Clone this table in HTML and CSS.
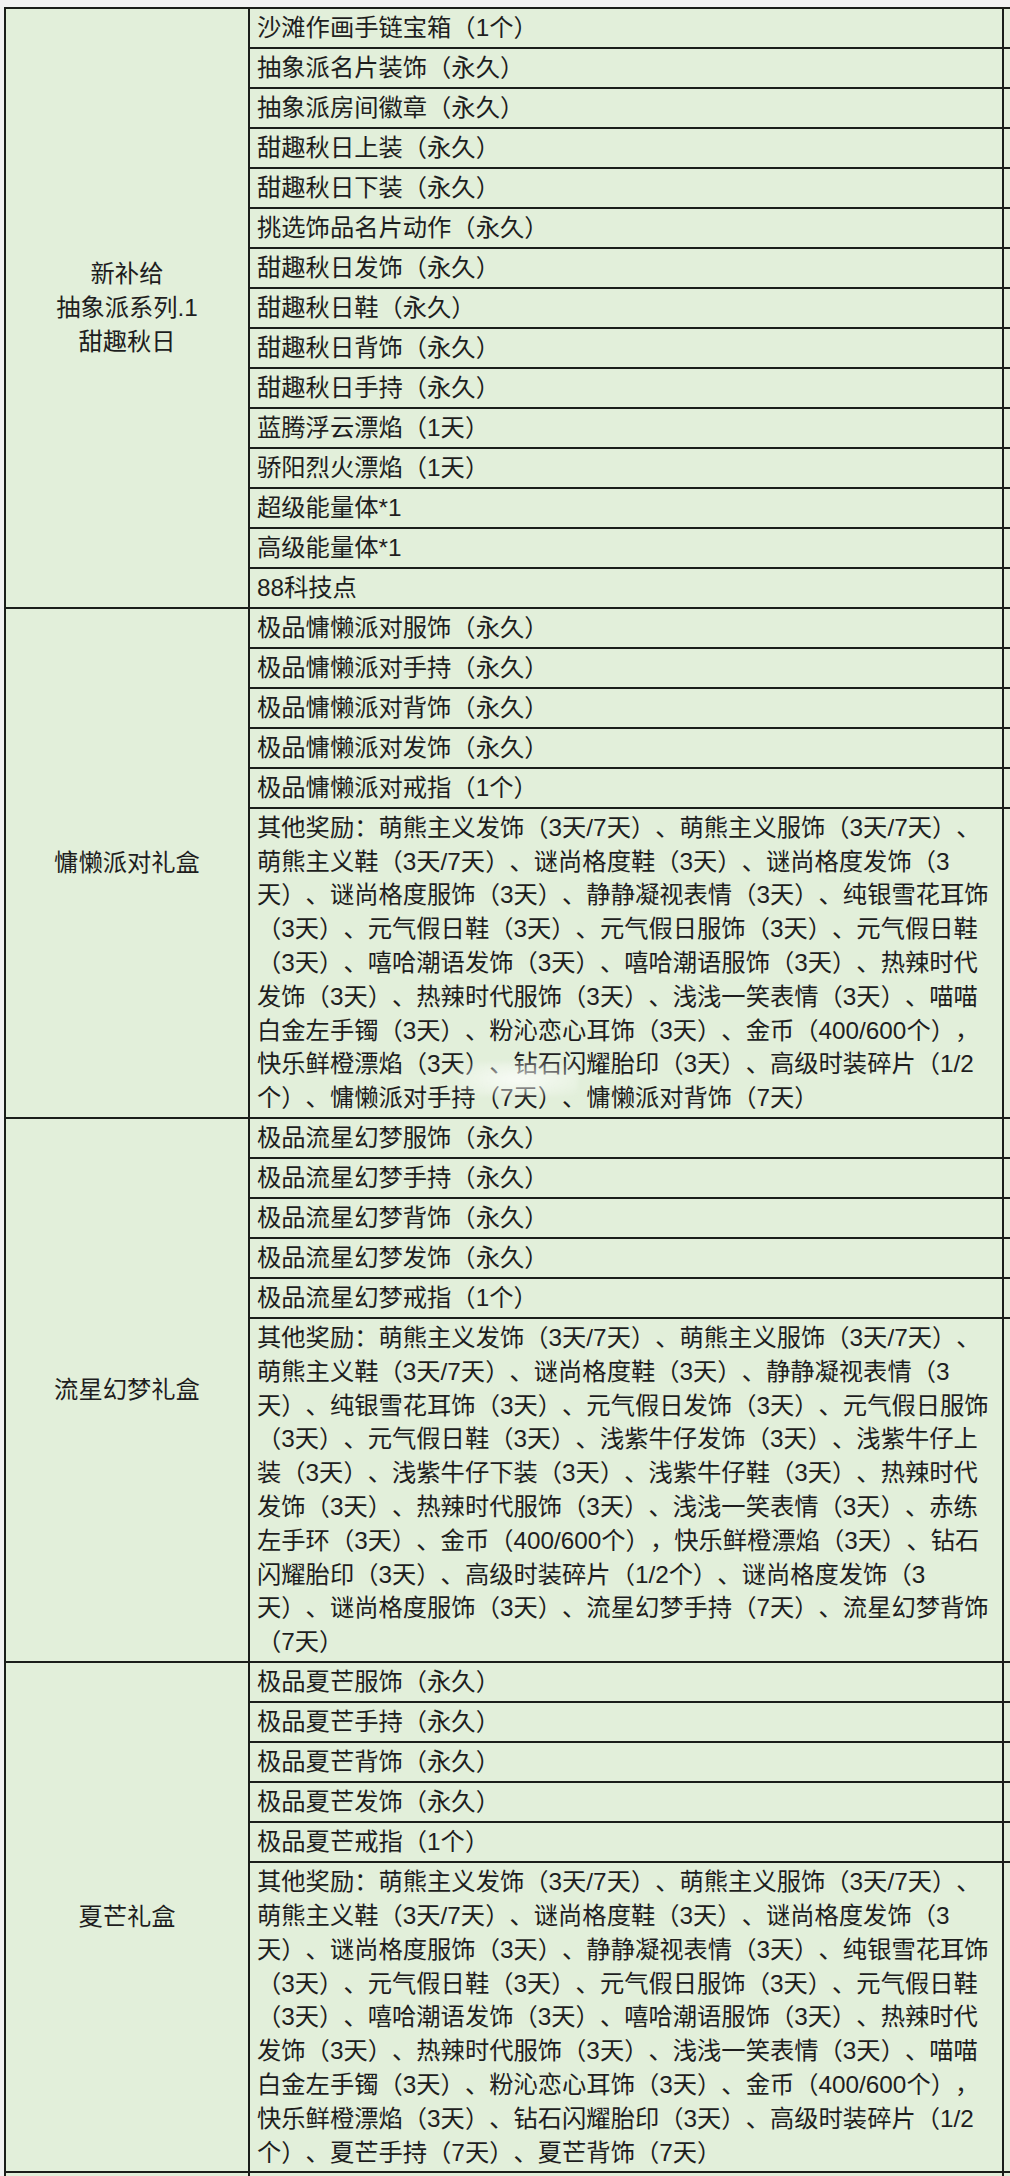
FILE: index.html
```html
<!DOCTYPE html>
<html lang="zh-CN">
<head>
<meta charset="utf-8">
<title>礼盒奖励</title>
<link rel="stylesheet" href="styles.css">
</head>
<body>
<div class="sheet">
  <div class="table">
    <section class="group">
      <div class="label">新补给<br>抽象派系列.1<br>甜趣秋日</div>
      <div class="rows">
        <div class="row"><div class="item">沙滩作画手链宝箱（1个）</div><div class="spill"></div></div>
        <div class="row"><div class="item">抽象派名片装饰（永久）</div><div class="spill"></div></div>
        <div class="row"><div class="item">抽象派房间徽章（永久）</div><div class="spill"></div></div>
        <div class="row"><div class="item">甜趣秋日上装（永久）</div><div class="spill"></div></div>
        <div class="row"><div class="item">甜趣秋日下装（永久）</div><div class="spill"></div></div>
        <div class="row"><div class="item">挑选饰品名片动作（永久）</div><div class="spill"></div></div>
        <div class="row"><div class="item">甜趣秋日发饰（永久）</div><div class="spill"></div></div>
        <div class="row"><div class="item">甜趣秋日鞋（永久）</div><div class="spill"></div></div>
        <div class="row"><div class="item">甜趣秋日背饰（永久）</div><div class="spill"></div></div>
        <div class="row"><div class="item">甜趣秋日手持（永久）</div><div class="spill"></div></div>
        <div class="row"><div class="item">蓝腾浮云漂焰（1天）</div><div class="spill"></div></div>
        <div class="row"><div class="item">骄阳烈火漂焰（1天）</div><div class="spill"></div></div>
        <div class="row"><div class="item">超级能量体*1</div><div class="spill"></div></div>
        <div class="row"><div class="item">高级能量体*1</div><div class="spill"></div></div>
        <div class="row"><div class="item">88科技点</div><div class="spill"></div></div>
      </div>
    </section>

    <section class="group">
      <div class="label">慵懒派对礼盒</div>
      <div class="rows">
        <div class="row"><div class="item">极品慵懒派对服饰（永久）</div><div class="spill"></div></div>
        <div class="row"><div class="item">极品慵懒派对手持（永久）</div><div class="spill"></div></div>
        <div class="row"><div class="item">极品慵懒派对背饰（永久）</div><div class="spill"></div></div>
        <div class="row"><div class="item">极品慵懒派对发饰（永久）</div><div class="spill"></div></div>
        <div class="row"><div class="item">极品慵懒派对戒指（1个）</div><div class="spill"></div></div>
        <div class="row"><div class="item">其他奖励：萌熊主义发饰（3天/7天）、萌熊主义服饰（3天/7天）、<br>萌熊主义鞋（3天/7天）、谜尚格度鞋（3天）、谜尚格度发饰（3<br>天）、谜尚格度服饰（3天）、静静凝视表情（3天）、纯银雪花耳饰<br>（3天）、元气假日鞋（3天）、元气假日服饰（3天）、元气假日鞋<br>（3天）、嘻哈潮语发饰（3天）、嘻哈潮语服饰（3天）、热辣时代<br>发饰（3天）、热辣时代服饰（3天）、浅浅一笑表情（3天）、喵喵<br>白金左手镯（3天）、粉沁恋心耳饰（3天）、金币（400/600个），<br>快乐鲜橙漂焰（3天）、钻石闪耀胎印（3天）、高级时装碎片（1/2<br>个）、慵懒派对手持（7天）、慵懒派对背饰（7天）</div><div class="spill"></div></div>
      </div>
    </section>

    <section class="group">
      <div class="label">流星幻梦礼盒</div>
      <div class="rows">
        <div class="row"><div class="item">极品流星幻梦服饰（永久）</div><div class="spill"></div></div>
        <div class="row"><div class="item">极品流星幻梦手持（永久）</div><div class="spill"></div></div>
        <div class="row"><div class="item">极品流星幻梦背饰（永久）</div><div class="spill"></div></div>
        <div class="row"><div class="item">极品流星幻梦发饰（永久）</div><div class="spill"></div></div>
        <div class="row"><div class="item">极品流星幻梦戒指（1个）</div><div class="spill"></div></div>
        <div class="row"><div class="item">其他奖励：萌熊主义发饰（3天/7天）、萌熊主义服饰（3天/7天）、<br>萌熊主义鞋（3天/7天）、谜尚格度鞋（3天）、静静凝视表情（3<br>天）、纯银雪花耳饰（3天）、元气假日发饰（3天）、元气假日服饰<br>（3天）、元气假日鞋（3天）、浅紫牛仔发饰（3天）、浅紫牛仔上<br>装（3天）、浅紫牛仔下装（3天）、浅紫牛仔鞋（3天）、热辣时代<br>发饰（3天）、热辣时代服饰（3天）、浅浅一笑表情（3天）、赤练<br>左手环（3天）、金币（400/600个），快乐鲜橙漂焰（3天）、钻石<br>闪耀胎印（3天）、高级时装碎片（1/2个）、谜尚格度发饰（3<br>天）、谜尚格度服饰（3天）、流星幻梦手持（7天）、流星幻梦背饰<br>（7天）</div><div class="spill"></div></div>
      </div>
    </section>

    <section class="group">
      <div class="label">夏芒礼盒</div>
      <div class="rows">
        <div class="row"><div class="item">极品夏芒服饰（永久）</div><div class="spill"></div></div>
        <div class="row"><div class="item">极品夏芒手持（永久）</div><div class="spill"></div></div>
        <div class="row"><div class="item">极品夏芒背饰（永久）</div><div class="spill"></div></div>
        <div class="row"><div class="item">极品夏芒发饰（永久）</div><div class="spill"></div></div>
        <div class="row"><div class="item">极品夏芒戒指（1个）</div><div class="spill"></div></div>
        <div class="row"><div class="item">其他奖励：萌熊主义发饰（3天/7天）、萌熊主义服饰（3天/7天）、<br>萌熊主义鞋（3天/7天）、谜尚格度鞋（3天）、谜尚格度发饰（3<br>天）、谜尚格度服饰（3天）、静静凝视表情（3天）、纯银雪花耳饰<br>（3天）、元气假日鞋（3天）、元气假日服饰（3天）、元气假日鞋<br>（3天）、嘻哈潮语发饰（3天）、嘻哈潮语服饰（3天）、热辣时代<br>发饰（3天）、热辣时代服饰（3天）、浅浅一笑表情（3天）、喵喵<br>白金左手镯（3天）、粉沁恋心耳饰（3天）、金币（400/600个），<br>快乐鲜橙漂焰（3天）、钻石闪耀胎印（3天）、高级时装碎片（1/2<br>个）、夏芒手持（7天）、夏芒背饰（7天）</div><div class="spill"></div></div>
      </div>
    </section>

    <section class="group">
      <div class="label"></div>
      <div class="rows">
        <div class="row"><div class="item">&nbsp;</div><div class="spill"></div></div>
      </div>
    </section>
  </div>
  <div class="watermark"></div>
</div>
</body>
</html>
```

FILE: styles.css
```css
html, body {
  margin: 0;
  padding: 0;
  overflow: hidden;
  background: #f2f2f2;
}

.sheet {
  position: relative;
  width: 1010px;
  height: 2176px;
  overflow: hidden;
  padding: 7px 0 0 4px;
  box-sizing: border-box;
}

.table {
  width: 1300px;
  border-top: 2px solid #1b1e1a;
  border-left: 2px solid #1b1e1a;
  background: #e2efda;
  font-family: "Liberation Sans", "Noto Sans CJK SC", sans-serif;
  font-size: 24.3px;
  line-height: 33.8px;
  color: #1e1e1e;
  text-spacing-trim: space-all;
}

.group {
  display: flex;
  border-bottom: 2px solid #1b1e1a;
}

.label {
  flex: 0 0 244px;
  box-sizing: border-box;
  border-right: 2px solid #1b1e1a;
  display: flex;
  align-items: center;
  justify-content: center;
  text-align: center;
  padding: 0 4px;
}

.rows {
  display: flex;
  flex-direction: column;
}

.row {
  display: flex;
  border-bottom: 2px solid #1b1e1a;
}

.row:last-child {
  border-bottom: 0;
}

.item {
  flex: 0 0 754px;
  box-sizing: border-box;
  border-right: 2px solid #1b1e1a;
  padding: 2.1px 7px;
  white-space: nowrap;
}

.spill {
  flex: 0 0 300px;
}

.watermark {
  position: absolute;
  left: 458px;
  top: 1062px;
  width: 120px;
  height: 34px;
  background: radial-gradient(ellipse at center, rgba(255,255,255,0.75) 0%, rgba(255,255,255,0.35) 55%, rgba(255,255,255,0) 100%);
  filter: blur(2px);
}
```
